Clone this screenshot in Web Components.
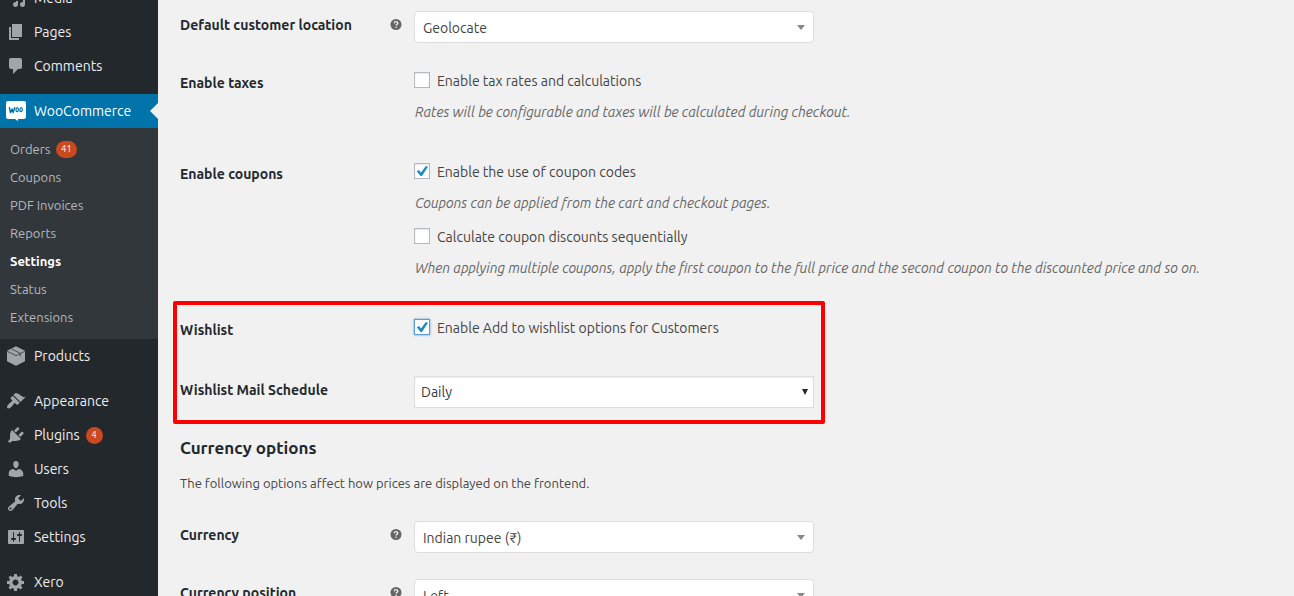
<!DOCTYPE html>
<html lang="en">
<head>
<meta charset="utf-8">
<title>WooCommerce settings</title>
<style>
  html, body { margin: 0; height: 100%; overflow: hidden; }
  body {
    background: #f1f1f1; color: #444;
    font-family: Ubuntu, "Noto Sans", sans-serif;
    font-size: 14px; line-height: 20px;
    --body: 14px; --small: 13px;
  }
</style>
</head>
<body>
<admin-shell>
  <admin-menu slot="menu">
    <menu-item icon="media">Media</menu-item>
    <menu-item icon="pages">Pages</menu-item>
    <menu-item icon="comments">Comments</menu-item>
    <menu-item icon="woo" current gap>WooCommerce</menu-item>
    <sub-menu>
      <sub-item count="41">Orders</sub-item>
      <sub-item>Coupons</sub-item>
      <sub-item>PDF Invoices</sub-item>
      <sub-item>Reports</sub-item>
      <sub-item current>Settings</sub-item>
      <sub-item>Status</sub-item>
      <sub-item>Extensions</sub-item>
    </sub-menu>
    <menu-item icon="products">Products</menu-item>
    <menu-item icon="appearance" gap>Appearance</menu-item>
    <menu-item icon="plugins" count="4">Plugins</menu-item>
    <menu-item icon="users">Users</menu-item>
    <menu-item icon="tools">Tools</menu-item>
    <menu-item icon="settings">Settings</menu-item>
    <menu-item icon="gear" gap>Xero</menu-item>
  </admin-menu>

  <settings-row label="Default customer location" tip>
    <select-field name="Default customer location" value="Geolocate" rounded></select-field>
  </settings-row>
  <settings-row label="Enable taxes" checks>
    <check-field label="Enable tax rates and calculations">Rates will be configurable and taxes will be calculated during checkout.</check-field>
  </settings-row>
  <settings-row label="Enable coupons" checks>
    <check-field label="Enable the use of coupon codes" checked>Coupons can be applied from the cart and checkout pages.</check-field>
    <check-field label="Calculate coupon discounts sequentially">When applying multiple coupons, apply the first coupon to the full price and the second coupon to the discounted price and so on.</check-field>
  </settings-row>
  <highlight-group>
    <settings-row label="Wishlist" checks>
      <check-field label="Enable Add to wishlist options for Customers" checked active></check-field>
    </settings-row>
    <settings-row label="Wishlist Mail Schedule">
      <select-field name="Wishlist Mail Schedule" value="Daily"></select-field>
    </settings-row>
  </highlight-group>
  <section-title heading="Currency options">The following options affect how prices are displayed on the frontend.</section-title>
  <settings-row label="Currency" tip>
    <select-field name="Currency" value="Indian rupee (₹)" rounded></select-field>
  </settings-row>
  <settings-row label="Currency position" tip>
    <select-field name="Currency position" value="Left" rounded></select-field>
  </settings-row>
</admin-shell>

<script>
const ICONS = {
  media: '<path d="M13 11V4c0-.55-.45-1-1-1h-1.67L9 1H5L3.67 3H2c-.55 0-1 .45-1 1v7c0 .55.45 1 1 1h10c.55 0 1-.45 1-1zM7 4.5c1.38 0 2.5 1.12 2.5 2.5S8.38 9.5 7 9.5 4.5 8.38 4.5 7 5.62 4.5 7 4.5zM14 6h5v10.5c0 1.38-1.12 2.5-2.5 2.5S14 17.88 14 16.5s1.12-2.5 2.5-2.5c.17 0 .34.02.5.05V9h-3V6zm-4 8.05V13h2v3.5c0 1.38-1.12 2.5-2.5 2.5S7 17.88 7 16.5 8.12 14 9.5 14c.17 0 .34.02.5.05z"/>',
  pages: '<path d="M6 15V2h10v13H6zm-1 1h8v2H3V5h2v11z"/>',
  comments: '<path d="M5 2h9c1.1 0 2 .9 2 2v7c0 1.1-.9 2-2 2h-2l-5 5v-5H5c-1.1 0-2-.9-2-2V4c0-1.1.9-2 2-2z"/>',
  woo: '<path fill="#fff" d="M2 0h16a2 2 0 0 1 2 2v14a2 2 0 0 1-2 2h-6v2l-3-2H2a2 2 0 0 1-2-2V2a2 2 0 0 1 2-2z"/><path fill="none" stroke="#0073aa" stroke-width="1.400" stroke-linecap="round" stroke-linejoin="round" d="M3.400 6.600l1 5 1.700-3.600 1 3.600 1.700-5"/><ellipse cx="11.200" cy="8.700" rx="1.200" ry="2" fill="none" stroke="#0073aa" stroke-width="1.200" transform="rotate(10 11.200 8.700)"/><ellipse cx="15.100" cy="8.700" rx="1.200" ry="2" fill="none" stroke="#0073aa" stroke-width="1.200" transform="rotate(10 15.100 8.700)"/>',
  products: '<path d="M10 .2l9 4.500v10.600l-9 4.500-9-4.500V4.700z"/><path fill="none" stroke="#23282d" stroke-width=".7" d="M1.200 5.300L10 9.600l8.800-4.300M5.600 3l8.600 4.300M14.200 7.500v2.800"/>',
  appearance: '<path d="M14.48 11.06L7.41 3.99l1.5-1.5c.5-.56 2.3-.47 3.51.32 1.21.8 1.43 1.28 2.91 2.1 1.18.64 2.45 1.26 4.45.85zm-.71.71L6.7 4.7 4.93 6.470c-.39.39-.39 1.02 0 1.41l1.06 1.06c.39.39.39 1.03 0 1.42-.6.6-1.43 1.11-2.21 1.69-.35.26-.7.53-1.01.84C1.43 14.230.4 16.080 1.4 17.070c.99 1 2.84-.03 4.18-1.36.31-.31.58-.66.85-1.02.57-.78 1.08-1.61 1.69-2.21.39-.39 1.02-.39 1.41 0l1.06 1.06c.39.39 1.02.39 1.41 0z"/>',
  plugins: '<path d="M13.11 4.36L9.87 7.6 8 5.73l3.24-3.24c.35-.34 1.05-.2 1.56.32.52.51.66 1.21.31 1.55zm-8 1.77l.91-1.12 9.01 9.01-1.19.84c-.71.71-2.63 1.16-3.82 1.16H6.14L4.9 17.26c-.59.59-1.54.59-2.12 0-.59-.58-.59-1.53 0-2.12l1.24-1.24v-3.88c0-1.13.4-3.19 1.09-3.89zm7.26 3.97l3.24-3.24c.34-.35 1.04-.21 1.55.31.52.51.66 1.21.31 1.55l-3.24 3.25z"/>',
  users: '<path d="M10 9.25c-2.27 0-2.73-3.44-2.73-3.44C7 4.02 7.82 2 9.97 2c2.16 0 2.98 2.02 2.71 3.81 0 0-.41 3.44-2.68 3.44zm0 2.57L12.72 10c2.39 0 4.52 2.33 4.52 4.53v2.49s-3.65 1.13-7.24 1.13c-3.65 0-7.24-1.13-7.24-1.13v-2.49c0-2.25 1.94-4.48 4.47-4.48z"/>',
  tools: '<path d="M16.68 9.77c-1.34 1.34-3.3 1.67-4.95.99l-5.41 6.52c-.99.99-2.59.99-3.58 0s-.99-2.59 0-3.57l6.52-5.42c-.68-1.65-.35-3.61.99-4.95 1.28-1.28 3.12-1.62 4.72-1.06l-2.89 2.89 2.82 2.82 2.86-2.87c.53 1.58.18 3.39-1.08 4.65zM3.81 16.21c.4.39 1.04.39 1.43 0 .4-.4.4-1.04 0-1.43-.39-.4-1.03-.4-1.43 0-.39.39-.39 1.03 0 1.43z"/>',
  settings: '<path d="M18 16V4c0-.55-.45-1-1-1H3c-.55 0-1 .45-1 1v12c0 .55.45 1 1 1h14c.55 0 1-.45 1-1zM8 11h1c.55 0 1 .45 1 1s-.45 1-1 1H8v1.5c0 .28-.22.5-.5.5s-.5-.22-.5-.5V13H6c-.55 0-1-.45-1-1s.45-1 1-1h1V5.500c0-.28.22-.5.5-.5s.5.22.5.5V11zm5-2h-1c-.55 0-1-.45-1-1s.45-1 1-1h1V5.500c0-.28.22-.5.5-.5s.5.22.5.5V7h1c.55 0 1 .45 1 1s-.45 1-1 1h-1v5.500c0 .28-.22.5-.5.5s-.5-.22-.5-.5V9z"/>',
  gear: '<path d="M18 12h-2.180c-.17.7-.44 1.350-.81 1.930l1.540 1.540-2.100 2.100-1.540-1.540c-.58.36-1.230.63-1.910.79V19H8v-2.180c-.68-.16-1.330-.43-1.910-.79l-1.540 1.540-2.120-2.120 1.540-1.540c-.36-.58-.63-1.230-.79-1.910H1V9.030h2.170c.16-.7.44-1.350.8-1.940L2.430 5.550l2.100-2.100 1.540 1.540c.58-.37 1.240-.64 1.930-.81V2h3v2.180c.68.16 1.330.43 1.910.79l1.540-1.540 2.120 2.120-1.540 1.540c.36.59.64 1.240.8 1.940H18V12zm-8.500 1.500c1.660 0 3-1.340 3-3s-1.340-3-3-3-3 1.340-3 3 1.340 3 3 3z"/>'
};

// Registers an element whose shadow root is filled by render(element).
const define = (name, render) => customElements.define(name, class extends HTMLElement {
  connectedCallback() {
    if (!this.shadowRoot) this.attachShadow({ mode: 'open' }).innerHTML = render(this);
  }
});

const BADGE = `.badge { background: #ca4a1f; color: #fff; border-radius: 10px; min-width: 17px; height: 17px;
  box-sizing: border-box; margin-left: 6px; padding: 0 5px; font-size: 9px; line-height: 17px; text-align: center; }`;
const badge = el => el.hasAttribute('count') ? `<span class="badge">${el.getAttribute('count')}</span>` : '';

define('admin-shell', () => `
  <style>
    :host { display: grid; grid-template-columns: 158px minmax(0, 1fr); height: 100vh; overflow: hidden; }
    nav { background: #23282d; overflow: hidden; }
    main { padding-left: 22px; overflow: hidden; }
    form { margin-top: -4px; }
  </style>
  <nav aria-label="Admin"><slot name="menu"></slot></nav>
  <main><form><slot></slot></form></main>`);

// The list is scrolled, so its first entry starts above the window.
define('admin-menu', () => `
  <style>:host { display: flex; flex-direction: column; margin-top: -19px; }</style><slot></slot>`);

define('menu-item', el => `
  <style>
    :host { display: block; }
    :host([gap]) { margin-top: 11px; }
    a { position: relative; display: flex; align-items: center; height: 34px; padding-left: 6px;
        color: #eee; text-decoration: none; font-size: var(--body); line-height: 20px; }
    svg { width: 20px; height: 20px; margin-right: 8px; fill: #a0a5aa; flex: none; }
    :host([current]) a { background: #0073aa; color: #fff; }
    :host([current]) a::after { content: ""; position: absolute; right: 0; top: 9px;
        border: 8px solid transparent; border-left: 0; border-right-color: #f1f1f1; }
    ${BADGE}
  </style>
  <a href="#"><svg viewBox="0 0 20 20" aria-hidden="true">${ICONS[el.getAttribute('icon')]}</svg><slot></slot>${badge(el)}</a>`);

define('sub-menu', () => `
  <style>:host { display: block; background: #32373c; padding: 7px 0 8px; }</style><slot></slot>`);

define('sub-item', el => `
  <style>
    :host { display: block; }
    a { display: flex; align-items: center; height: 28px; padding-left: 10px; color: #b4b9be;
        text-decoration: none; font-size: var(--small); }
    :host([current]) a { color: #fff; font-weight: 700; }
    ${BADGE}
  </style>
  <a href="#"><slot></slot>${badge(el)}</a>`);

define('settings-row', el => `
  <style>
    :host { display: grid; grid-template-columns: 234px minmax(0, 1fr); box-sizing: border-box; padding-bottom: 11px; }
    :host([checks]) { padding-bottom: 13px; min-height: 60px; }
    .head { display: flex; justify-content: space-between; align-items: center; height: 20px;
            padding: 19px 12px 0 0; }
    .name { color: #23282d; font-weight: 700; font-size: var(--body); }
    .tip { width: 12px; height: 12px; }
    .field { padding-top: 15px; }
    :host([checks]) .field { padding-top: 13px; }
  </style>
  <div class="head"><span class="name">${el.getAttribute('label')}</span>${el.hasAttribute('tip') ? `
    <svg class="tip" viewBox="0 0 12 12" role="img" aria-label="Help"><circle cx="6" cy="5.500" r="5.500" fill="#666"/>
      <path d="M4.300 4.300c0-2.300 3.500-2.200 3.500-.2 0 1.300-1.700 1.200-1.700 2.500" fill="none" stroke="#f1f1f1" stroke-width="1.300"/><circle cx="6.100" cy="8.300" r=".8" fill="#f1f1f1"/></svg>` : ''}</div>
  <div class="field"><slot></slot></div>`);

define('select-field', el => `
  <style>
    :host { display: block; position: relative; width: 400px; max-width: 100%; }
    select { appearance: none; display: block; box-sizing: border-box; width: 100%; height: 32px; margin: 0;
             border: 1px solid #ddd; background: #fff; color: #32373c; padding: 0 24px 0 6px;
             font: inherit; font-size: var(--body); box-shadow: inset 0 1px 2px rgba(0,0,0,.07); }
    :host([rounded]) select { border-radius: 4px; padding-left: 8px; padding-top: 2px; color: #444; box-shadow: none; }
    svg { position: absolute; right: 6px; top: 13px; width: 6px; height: 6px; fill: #23282d; pointer-events: none; }
    :host([rounded]) svg { right: 9px; top: 14px; width: 8px; height: 5px; fill: #888; }
  </style>
  <select aria-label="${el.getAttribute('name')}"><option>${el.getAttribute('value')}</option></select>
  <svg viewBox="0 0 8 5" preserveAspectRatio="none" aria-hidden="true"><path d="M0 0h8L4 5z"/></svg>`);

define('check-field', el => `
  <style>
    :host { display: block; }
    label { display: flex; align-items: center; height: 28px; font-size: var(--body); }
    input { appearance: none; box-sizing: border-box; width: 16px; height: 16px; margin: 0 7px 0 0; flex: none;
            border: 1px solid #b4b9be; background: #fff; box-shadow: inset 0 1px 2px rgba(0,0,0,.1); }
    .box { display: grid; padding-bottom: 2px; }
    .box > * { grid-area: 1 / 1; }
    .box svg { display: none; width: 16px; height: 16px; fill: #1e8cbe; pointer-events: none; }
    input:checked + svg { display: block; }
    :host([active]) input { border-color: #5b9dd9; box-shadow: 0 0 2px rgba(30,140,190,.8); }
    p { margin: 7px 0 10px; padding-left: 1px; color: #666; font-style: italic; font-size: var(--body); line-height: 20px; white-space: nowrap; }
  </style>
  <label><span class="box"><input type="checkbox"${el.hasAttribute('checked') ? ' checked' : ''}>
    <svg viewBox="0 0 16 16" aria-hidden="true"><path d="M2.800 8.300l2.200-1.300 2 2.600L11.800 3l2.200.7L8 13H6.500z"/></svg></span>${el.getAttribute('label')}</label>
  ${el.textContent.trim() ? '<p><slot></slot></p>' : ''}`);

// Frame drawn over the two rows it calls out.
define('highlight-group', () => `
  <style>
    :host { display: block; position: relative; padding-bottom: 5px; }
    :host::after { content: ""; position: absolute; left: -7px; top: 0; bottom: 0; width: 652px;
                   box-sizing: border-box; border: 4px solid #f00; border-radius: 2px; pointer-events: none; }
  </style><slot></slot>`);

define('section-title', el => `
  <style>
    :host { display: block; padding: 12px 0 13px; }
    h2 { margin: 0 0 13px; color: #23282d; font-size: 17px; line-height: 24px; }
    p { margin: 0; font-size: var(--small); line-height: 20px; }
  </style>
  <h2>${el.getAttribute('heading')}</h2><p><slot></slot></p>`);
</script>
</body>
</html>
